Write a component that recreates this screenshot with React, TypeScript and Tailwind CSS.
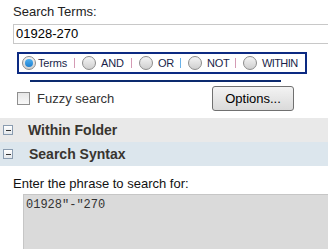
import React from "react"

function Radio({ checked }: { checked?: boolean }) {
  return (
    <span className="flex h-[14px] w-[14px] shrink-0 items-center justify-center rounded-full border border-[#8c8c8c] bg-gradient-to-b from-[#f4f4f4] to-[#cfcfcf]">
      {checked && <span className="h-[8px] w-[8px] rounded-full bg-gradient-to-b from-[#4fb0f0] to-[#1a7fd0]" />}
    </span>
  )
}

function Sep({ color }: { color: string }) {
  return (
    <span className="flex w-[8px] shrink-0">
      <span className={`h-[10px] w-[1px] ${color}`} />
    </span>
  )
}

function MinusBox() {
  return (
    <span className="flex h-[10px] w-[10px] items-center justify-center border border-[#8a9cb0] bg-gradient-to-b from-white to-[#e4e8ec]">
      <span className="h-[1px] w-[5px] bg-[#333]" />
    </span>
  )
}

export default function App() {
  return (
    <div className="h-[249px] w-[328px] overflow-hidden bg-white font-['Liberation_Sans',Arial,sans-serif] text-[13px]">
      {/* Search terms */}
      <div className="ml-[13px] pt-[4px] leading-[15px] text-[#222]">Search Terms:</div>
      <div className="ml-[13px] mt-[5px] flex h-[20px] w-[340px] items-center border border-[#c8c8c8] pl-[2px] text-black">
        01928-270
      </div>

      {/* Operators */}
      <div className="ml-[17px] mt-[8px] flex h-[22px] w-[290px] items-center border-2 border-[#0c2a82] pl-[3px] text-[11px] tracking-[-0.2px] text-[#1a1f4a]">
        <Radio checked />
        <span className="ml-[2px] w-[36px] shrink-0">Terms</span>
        <Sep color="bg-[#d49ab4]" />
        <Radio />
        <span className="ml-[5px] w-[30px] shrink-0">AND</span>
        <Sep color="bg-[#d49ab4]" />
        <Radio />
        <span className="ml-[5px] w-[22px] shrink-0">OR</span>
        <Sep color="bg-[#6ab2e8]" />
        <Radio />
        <span className="ml-[5px] w-[28px] shrink-0">NOT</span>
        <Sep color="bg-[#d49ab4]" />
        <Radio />
        <span className="ml-[5px] tracking-[-0.6px]">WITHIN</span>
      </div>
      <div className="ml-[30px] mt-[6px] h-[2px] w-[251px] bg-[#0c2a6e]" />

      {/* Fuzzy + options */}
      <div className="mt-[4px] flex h-[25px] items-center">
        <span className="ml-[17px] h-[13px] w-[13px] border border-[#8f8f8f] bg-gradient-to-b from-[#e6e6e6] to-[#f8f8f8]" />
        <span className="ml-[7px] text-[#333]">Fuzzy search</span>
        <button className="ml-auto mr-[34px] h-[25px] w-[82px] rounded-[3px] border border-[#707070] bg-gradient-to-b from-[#f3f3f3] to-[#dadada] text-[13px] text-black">
          Options...
        </button>
      </div>

      {/* Sections */}
      <div className="mt-[7px] flex h-[24px] items-center bg-[#e9e9e9] pl-[3px]">
        <MinusBox />
        <span className="ml-[15px] text-[14px] font-bold text-[#38342f]">Within Folder</span>
      </div>
      <div className="flex h-[24px] items-center bg-[#dce6ed] pl-[3px]">
        <MinusBox />
        <span className="ml-[16px] text-[14px] font-bold text-[#38342f]">Search Syntax</span>
      </div>

      <div className="ml-[13px] mt-[10px] leading-[15px] text-[#111]">Enter the phrase to search for:</div>
      <div className="ml-[23px] mt-[3px] h-[80px] w-[320px] border-l border-t border-[#c6c6c6] bg-[#dadada] pl-[2px] pt-[3px] font-['Liberation_Mono','Courier_New',monospace] text-[12px] leading-[14px] text-[#333]">
        01928"-"270
      </div>
    </div>
  )
}
